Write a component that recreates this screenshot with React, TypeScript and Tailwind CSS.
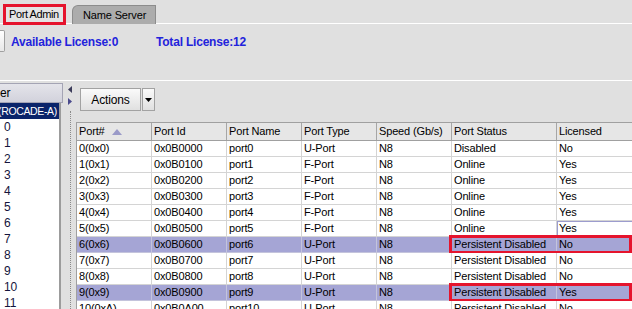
import React from "react";

const cols = [75, 75, 75, 75, 75, 105, 76];
const headers = ["Port#", "Port Id", "Port Name", "Port Type", "Speed (Gb/s)", "Port Status", "Licensed"];

type Row = {
  cells: string[];
  selected?: boolean;
  boxed?: boolean;
};

const hex = ["0", "1", "2", "3", "4", "5", "6", "7", "8", "9", "A"];

const rows: Row[] = hex.map((h, i) => {
  const online = i >= 1 && i <= 5;
  return {
    cells: [
      `${i}(0x${h})`,
      `0x0B0${h}00`,
      `port${i}`,
      online ? "F-Port" : "U-Port",
      "N8",
      i === 0 ? "Disabled" : online ? "Online" : "Persistent Disabled",
      online || i === 9 ? "Yes" : "No",
    ],
    selected: i === 6 || i === 9,
    boxed: i === 6 || i === 9,
  };
});

function SortArrow() {
  return (
    <svg width="10" height="6" viewBox="0 0 10 6" className="ml-[7px] mt-[1px]">
      <path d="M0 6 L5 0 L10 6 Z" fill="#9a9ac8" />
    </svg>
  );
}

export default function App() {
  return (
    <div className="w-[632px] h-[309px] overflow-hidden bg-[#e0e0e0] text-[11px] leading-none tracking-[-0.15px] text-black font-['Liberation_Sans',Arial,sans-serif]">
      {/* Tabs */}
      <div className="h-[24px] flex items-start border-b border-white">
        <div className="relative z-10 ml-[3px] mt-[4px] h-[21px] w-[63px] border-[3px] border-[#e5142d] bg-[#e4e4e4] flex items-center pl-[3px] whitespace-nowrap tracking-[-0.4px]">
          Port Admin
        </div>
        <div className="ml-[6px] mt-[5px] h-[19px] w-[84px] rounded-tl-[6px] border border-b-0 border-[#8c8c8c] bg-[#acacac] flex items-center pl-[10px]">
          Name Server
        </div>
      </div>

      {/* License info */}
      <div className="h-[57px] border-b border-white flex items-start">
        <div className="mt-[6px] h-[22px] w-[5px] rounded-r-[2px] border border-l-0 border-[#a0a0a0] bg-gradient-to-b from-white to-[#e8e8e8]" />
        <div className="mt-[12px] ml-[6px] flex text-[12px] font-bold tracking-[-0.2px] text-[#2323dc]">
          <span className="w-[145px]">Available License:0</span>
          <span>Total License:12</span>
        </div>
      </div>

      {/* Main */}
      <div className="flex h-[228px] overflow-hidden">
        {/* Left tree panel */}
        <div className="mt-[2px] w-[63px] shrink-0 flex flex-col overflow-hidden">
          <div className="h-[20px] shrink-0 border-y border-r border-[#a4a4b4] bg-gradient-to-b from-[#e4e4ea] to-[#d2d2dc] flex items-center text-[12px]">
            er
          </div>
          <div className="flex-1 flex flex-col bg-white border-r-[2px] border-[#9c9c9c] mr-[2px] text-[12px]">
            <div className="h-[16px] shrink-0 bg-[#0a246a] text-white flex items-center whitespace-nowrap overflow-hidden">
              <span className="-ml-[2px] text-[10.5px] tracking-[-0.35px]">(ROCADE-A)</span>
            </div>
            {Array.from({ length: 12 }, (_, n) => (
              <div key={n} className="h-[16px] shrink-0 flex items-center pl-[4px] text-[#14143c]">
                {n}
              </div>
            ))}
          </div>
        </div>

        {/* Splitter */}
        <div className="w-[13px] shrink-0 flex flex-col items-center">
          <svg width="4" height="7" viewBox="0 0 4 7" className="mt-[5px] ml-[1px] shrink-0">
            <path d="M4 0 L0 3.5 L4 7 Z" fill="#3c3c5a" />
          </svg>
          <svg width="4" height="7" viewBox="0 0 4 7" className="mt-[5px] ml-[1px] shrink-0">
            <path d="M0 0 L4 3.5 L0 7 Z" fill="#4a4a8c" />
          </svg>
          <div className="mt-[6px] flex-1 ml-[2px] border-l border-dotted border-[#8a8a8a]" />
        </div>

        {/* Right content */}
        <div className="flex-1 flex flex-col min-w-0">
          <div className="mt-[7px] ml-[4px] flex h-[23px] shrink-0">
            <div className="w-[61px] border border-[#a2a2a2] bg-gradient-to-b from-[#fafafa] to-[#e0e0e0] flex items-center justify-center text-[12px]">
              Actions
            </div>
            <div className="ml-[1px] w-[13px] border border-[#a2a2a2] bg-gradient-to-b from-[#fafafa] to-[#e0e0e0] flex items-center justify-center">
              <svg width="7" height="4" viewBox="0 0 7 4">
                <path d="M0 0 L7 0 L3.5 4 Z" fill="#000" />
              </svg>
            </div>
          </div>

          {/* Table */}
          <div className="mt-[11px] shrink-0 border-l border-[#a0a0a0] bg-white">
            <div className="flex h-[19px] border-y border-[#a0a0a0] bg-[#e6e6e6]">
              {headers.map((h, i) => (
                <div
                  key={h}
                  style={{ width: cols[i] }}
                  className="shrink-0 border-r border-[#a6a6a6] flex items-center pl-[2px] whitespace-nowrap"
                >
                  {h}
                  {i === 0 && <SortArrow />}
                </div>
              ))}
            </div>
            {rows.map((r, ri) => (
              <div
                key={ri}
                className={`relative flex h-[16px] border-b ${
                  r.selected ? "bg-[#a5a5d5] border-[#c4c4dc]" : "bg-white border-[#d4d4d4]"
                }`}
              >
                {r.cells.map((c, ci) => (
                  <div
                    key={ci}
                    style={{ width: cols[ci] }}
                    className={`shrink-0 border-r flex items-center pl-[2px] whitespace-nowrap overflow-hidden ${
                      r.selected ? "border-[#c4c4dc]" : "border-[#d4d4d4]"
                    } ${ri === 5 && ci === 6 ? "outline outline-1 -outline-offset-1 outline-[#9c9cce]" : ""}`}
                  >
                    {c}
                  </div>
                ))}
                {r.boxed && (
                  <div className="absolute left-[372px] right-0 -top-[2px] -bottom-[2px] border-[3px] border-[#e5142d] pointer-events-none" />
                )}
              </div>
            ))}
          </div>
        </div>
      </div>
    </div>
  );
}
